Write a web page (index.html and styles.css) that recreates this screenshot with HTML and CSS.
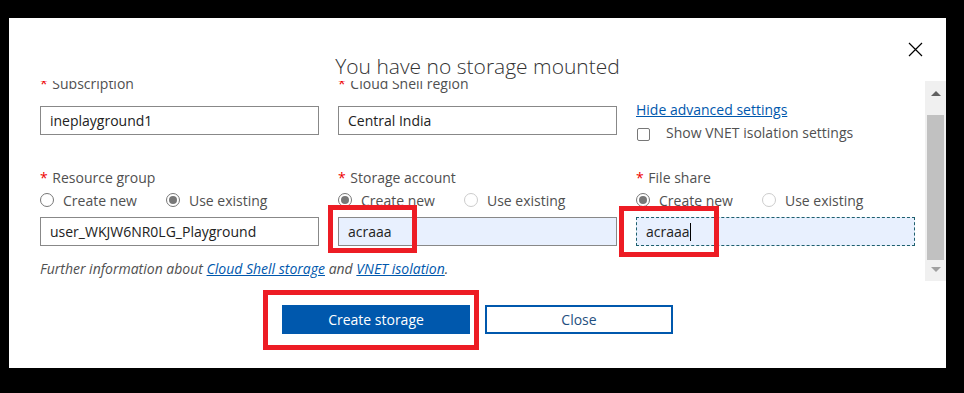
FILE: index.html
```html
<!DOCTYPE html>
<html lang="en">
<head>
    <meta charset="UTF-8">
    <title>Cloud Shell storage</title>
    <link rel="stylesheet" href="styles.css">
</head>
<body>
    <div class="dialog">
        <div class="dialog-header">
            <h1 class="title">You have no storage mounted</h1>
            <button class="close-x" aria-label="Close">
                <svg width="15" height="15" viewBox="0 0 15 15">
                    <path d="M1 1 L14 14 M14 1 L1 14" stroke="#000" stroke-width="1.2" fill="none"/>
                </svg>
            </button>
        </div>

        <div class="dialog-body">
            <div class="scroll-view">
                <div class="form">
                    <div class="field">
                        <label class="label"><span class="req">*</span> Subscription</label>
                        <input class="input" value="ineplayground1">
                    </div>
                    <div class="field">
                        <label class="label"><span class="req">*</span> Cloud Shell region</label>
                        <input class="input" value="Central India">
                    </div>
                    <div class="field advanced">
                        <a class="link" href="#">Hide advanced settings</a>
                        <label class="check">
                            <span class="box"></span>
                            Show VNET isolation settings
                        </label>
                    </div>

                    <div class="field">
                        <label class="label"><span class="req">*</span> Resource group</label>
                        <div class="radios">
                            <span class="radio"><span class="dot"></span>Create new</span>
                            <span class="radio"><span class="dot on"></span>Use existing</span>
                        </div>
                        <input class="input" value="user_WKJW6NR0LG_Playground">
                    </div>
                    <div class="field">
                        <label class="label"><span class="req">*</span> Storage account</label>
                        <div class="radios">
                            <span class="radio"><span class="dot on"></span>Create new</span>
                            <span class="radio off"><span class="dot"></span>Use existing</span>
                        </div>
                        <input class="input filled" value="acraaa">
                    </div>
                    <div class="field">
                        <label class="label"><span class="req">*</span> File share</label>
                        <div class="radios">
                            <span class="radio"><span class="dot on"></span>Create new</span>
                            <span class="radio off"><span class="dot"></span>Use existing</span>
                        </div>
                        <div class="input filled focused">acraaa<span class="caret"></span></div>
                    </div>

                    <p class="info">Further information about <a href="#">Cloud Shell storage</a> and <a href="#">VNET isolation</a>.</p>
                </div>
            </div>
            <div class="scrollbar">
                <span class="arrow up"></span>
                <span class="thumb"></span>
                <span class="arrow down"></span>
            </div>
        </div>

        <div class="dialog-footer">
            <button class="btn primary">Create storage</button>
            <button class="btn secondary">Close</button>
        </div>
    </div>

    <!-- red callouts drawn on the screenshot -->
    <div class="mark mark-account"></div>
    <div class="mark mark-share"></div>
    <div class="mark mark-create"></div>
</body>
</html>
```

FILE: styles.css
```css
body {
    margin: 0;
    background-color: #000;
    font-family: 'Open Sans', 'Noto Sans', sans-serif;
    color: #333;
    position: relative;
    width: 964px;
    height: 393px;
    overflow: hidden;
}

.dialog {
    margin: 18px 0 0 9px;
    width: 937px;
    height: 350px;
    background-color: #fff;
    display: flex;
    flex-direction: column;
}

.dialog-header {
    height: 63px;
    display: grid;
}

.title {
    grid-area: 1 / 1;
    justify-self: center;
    align-self: end;
    margin: 0;
    font-size: 21px;
    font-weight: 300;
    color: #333;
    line-height: 30px;
}

.close-x {
    grid-area: 1 / 1;
    justify-self: end;
    align-self: start;
    margin: 24px 23px 0 0;
    padding: 0;
    border: none;
    background: none;
    width: 15px;
    height: 15px;
}

.close-x svg {
    display: block;
}

.dialog-body {
    display: flex;
    height: 200px;
}

.scroll-view {
    flex: 1;
    overflow: hidden;
}

.form {
    margin-top: -7px;
    padding-left: 31px;
    display: grid;
    grid-template-columns: 279px 279px 279px;
    column-gap: 19px;
    row-gap: 26px;
}

.field {
    display: flex;
    flex-direction: column;
}

.label {
    font-size: 14px;
    line-height: 20px;
    color: #505050;
    margin-bottom: 12px;
}

.req {
    color: #e00;
    margin-right: 1px;
}

.radios {
    display: flex;
    gap: 29px;
    margin: -12px 0 5px 0;
    height: 24px;
    align-items: center;
}

.radio {
    display: flex;
    align-items: center;
    font-size: 14px;
    color: #505050;
}

.dot {
    width: 14px;
    height: 14px;
    border: 1px solid #777;
    border-radius: 50%;
    margin-right: 9px;
    box-sizing: border-box;
    display: flex;
    align-items: center;
    justify-content: center;
}

.radio.off .dot {
    border-color: #ccc;
}

.dot.on::after {
    content: "";
    width: 8px;
    height: 8px;
    border-radius: 50%;
    background-color: #777;
}

.input {
    box-sizing: border-box;
    height: 29px;
    width: 279px;
    border: 1px solid #888;
    padding: 0 9px;
    font-family: inherit;
    font-size: 14px;
    color: #222;
    line-height: 27px;
    background-color: #fff;
}

.input.filled {
    background-color: #e8f0fe;
}

.input.focused {
    border: 1px dashed #1d5f6e;
    display: flex;
    align-items: center;
}

.caret {
    width: 1px;
    height: 18px;
    background-color: #000;
}

.advanced {
    padding-top: 26px;
}

.link {
    font-size: 14px;
    color: #0058ad;
    line-height: 20px;
}

.check {
    display: flex;
    align-items: center;
    font-size: 14px;
    color: #505050;
    margin-top: 3px;
}

.box {
    width: 13px;
    height: 13px;
    border: 1px solid #777;
    border-radius: 2px;
    margin: 3px 16px 0 1px;
    box-sizing: border-box;
}

.info {
    grid-column: 1 / 4;
    margin: -13px 0 0 0;
    font-size: 14px;
    font-style: italic;
    color: #505050;
}

.info a {
    color: #0058ad;
    text-decoration: underline;
}

.scrollbar {
    width: 21px;
    background-color: #f0f0f0;
    display: flex;
    flex-direction: column;
    align-items: center;
}

.arrow {
    width: 0;
    height: 0;
    border-left: 5px solid transparent;
    border-right: 5px solid transparent;
}

.arrow.up {
    margin-top: 10px;
    border-bottom: 5px solid #606060;
}

.arrow.down {
    margin-top: 7px;
    border-top: 5px solid #a0a0a0;
}

.thumb {
    margin-top: 19px;
    width: 17px;
    height: 145px;
    background-color: #c1c1c1;
}

.dialog-footer {
    display: flex;
    justify-content: center;
    gap: 15px;
    padding-top: 24px;
}

.btn {
    width: 188px;
    height: 29px;
    font-family: inherit;
    font-size: 14px;
    box-sizing: border-box;
    cursor: pointer;
}

.btn.primary {
    background-color: #0058ad;
    color: #fff;
    border: none;
}

.btn.secondary {
    background-color: #fff;
    color: #1f4f80;
    border: 2px solid #0058ad;
}

.mark {
    position: absolute;
    border: 5px solid #ed1c24;
    box-sizing: border-box;
}

.mark-account {
    left: 328px;
    top: 205px;
    width: 89px;
    height: 48px;
}

.mark-share {
    left: 619px;
    top: 206px;
    width: 100px;
    height: 51px;
}

.mark-create {
    left: 263px;
    top: 290px;
    width: 216px;
    height: 60px;
}
```
